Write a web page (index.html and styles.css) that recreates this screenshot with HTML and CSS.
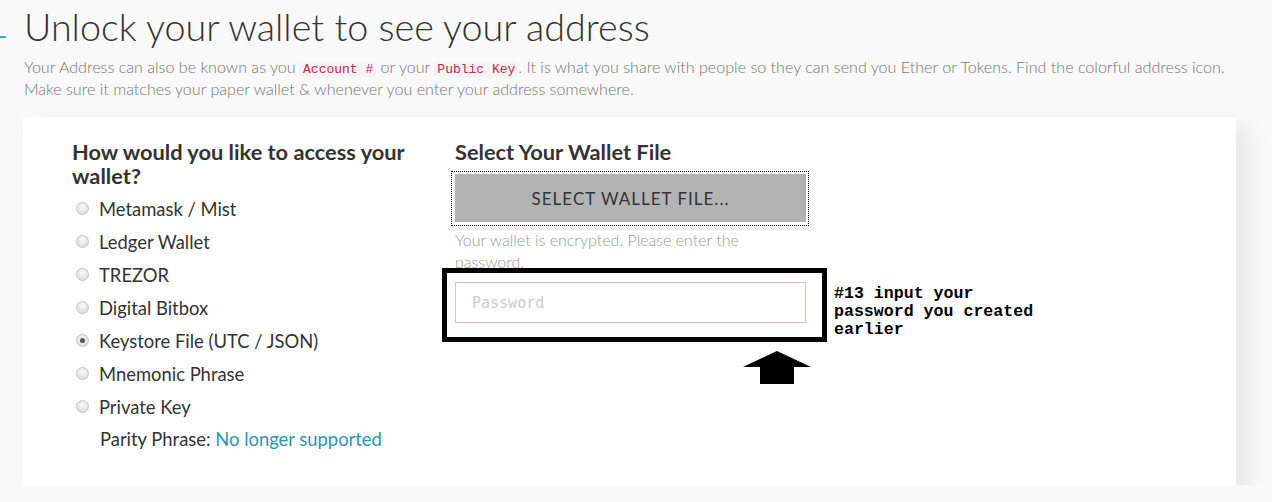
FILE: index.html
```html
<!DOCTYPE html>
<html lang="en">
  <head>
    <meta charset="UTF-8" />
    <meta name="viewport" content="width=device-width, initial-scale=1.0" />
    <title>Unlock your wallet</title>
    <link rel="stylesheet" href="styles.css">
  </head>
  <body>
    <span class="edge-dash"></span>
    <header class="intro">
      <h1>Unlock your wallet to see your address</h1>
      <p>Your Address can also be known as you <code>Account #</code> or your <code>Public Key</code>. It is what you share with people so they can send you Ether or Tokens. Find the colorful address icon. Make sure it matches your paper wallet &amp; whenever you enter your address somewhere.</p>
    </header>
    <section class="card">
      <div class="col">
        <h2>How would you like to access your wallet?</h2>
        <ul class="options">
          <li><span class="radio"></span>Metamask / Mist</li>
          <li><span class="radio"></span>Ledger Wallet</li>
          <li><span class="radio"></span>TREZOR</li>
          <li><span class="radio"></span>Digital Bitbox</li>
          <li><span class="radio checked"></span>Keystore File (UTC / JSON)</li>
          <li><span class="radio"></span>Mnemonic Phrase</li>
          <li><span class="radio"></span>Private Key</li>
        </ul>
        <p class="parity">Parity Phrase: <a href="#">No longer supported</a></p>
      </div>
      <div class="col col-file">
        <h2>Select Your Wallet File</h2>
        <div class="file-btn-wrap">
          <button class="file-btn">SELECT WALLET FILE...</button>
        </div>
        <p class="hint">Your wallet is encrypted. Please enter the password.</p>
        <input class="password" type="password" placeholder="Password" />
        <!-- annotation overlay -->
        <div class="mark-box"></div>
        <p class="note">#13 input your password you created earlier</p>
        <svg class="arrow" width="68" height="34" viewBox="0 0 68 34">
          <path d="M34 0 L68 16 L51 16 L51 33 L17 33 L17 16 L0 16 Z" fill="#000" />
        </svg>
      </div>
    </section>
  </body>
</html>
```

FILE: styles.css
```css
body {
  margin: 0;
  background-color: #f9f9f9;
  font-family: Lato, "Open Sans", sans-serif;
  color: #333;
  position: relative;
}
.edge-dash {
  position: absolute;
  left: 0;
  top: 36px;
  width: 6px;
  height: 2px;
  background: #3aa7c3;
}
.intro {
  padding: 5px 0 0 24px;
}
.intro h1 {
  margin: 0;
  font-size: 37.7px;
  font-weight: 300;
  line-height: 44px;
  color: #333;
}
.intro p {
  margin: 7px 0 0;
  font-size: 16.1px;
  font-weight: 300;
  line-height: 22px;
  color: #777;
  max-width: 1225px;
}
code {
  font-family: "Liberation Mono", "DejaVu Sans Mono", monospace;
  font-size: 13px;
  line-height: 16px;
  color: #c7254e;
  background-color: #f9f2f4;
  padding: 0 3px;
  border-radius: 3px;
}
.card {
  margin: 17px 0 0 23px;
  width: 1213px;
  height: 368px;
  box-sizing: border-box;
  background: #fff;
  box-shadow: 12px 10px 22px rgba(0, 0, 0, 0.08);
  padding: 23px 0 0 49px;
  display: grid;
  grid-template-columns: 350px 351px;
  column-gap: 33px;
  align-items: start;
}
.col {
  position: relative;
}
h2 {
  margin: 0;
  font-size: 21.8px;
  font-weight: 700;
  line-height: 24px;
  color: #333;
}
.options {
  list-style: none;
  margin: 4px 0 0;
  padding: 0;
}
.options li {
  display: flex;
  align-items: center;
  height: 33px;
  font-size: 18.4px;
  padding-left: 4px;
}
.radio {
  width: 11px;
  height: 11px;
  border-radius: 50%;
  border: 1px solid #c4c4c4;
  background: radial-gradient(circle at 50% 35%, #fafafa, #d4d4d4);
  margin-right: 10px;
  display: flex;
  align-items: center;
  justify-content: center;
}
.radio.checked::after {
  content: "";
  width: 5px;
  height: 5px;
  border-radius: 50%;
  background: #555;
}
.parity {
  margin: 0;
  padding-left: 28px;
  font-size: 18.4px;
  line-height: 33px;
}
.parity a {
  color: #2a94b6;
  text-decoration: none;
}
.file-btn-wrap {
  margin: 7px 0 0 -4px;
  width: 358px;
  height: 55px;
  box-sizing: border-box;
  border: 1px dotted #000;
  padding: 2px 3px;
}
.file-btn {
  display: block;
  width: 351px;
  height: 48px;
  border: none;
  background: #b3b3b3;
  font-family: Lato, sans-serif;
  font-size: 17px;
  letter-spacing: 1px;
  color: #333;
}
.hint {
  margin: 3px 0 0;
  width: 351px;
  font-size: 16px;
  font-weight: 300;
  line-height: 22px;
  color: #999;
}
.password {
  display: block;
  margin-top: 9px;
  width: 351px;
  height: 41px;
  box-sizing: border-box;
  border: 1px solid #f0b9b9;
  padding: 0 16px;
  font-family: "DejaVu Sans Mono", monospace;
  font-size: 15px;
  outline: none;
}
.password::placeholder {
  color: #cccccc;
}
.mark-box {
  position: absolute;
  left: -13px;
  top: 128px;
  width: 385px;
  height: 74px;
  box-sizing: border-box;
  border: 5px solid #000;
}
.note {
  position: absolute;
  left: 379px;
  top: 145px;
  width: 210px;
  margin: 0;
  font-family: "Liberation Mono", "Courier New", monospace;
  font-weight: 700;
  font-size: 16.6px;
  line-height: 18px;
  color: #000;
}
.arrow {
  position: absolute;
  left: 288px;
  top: 211px;
}
```
